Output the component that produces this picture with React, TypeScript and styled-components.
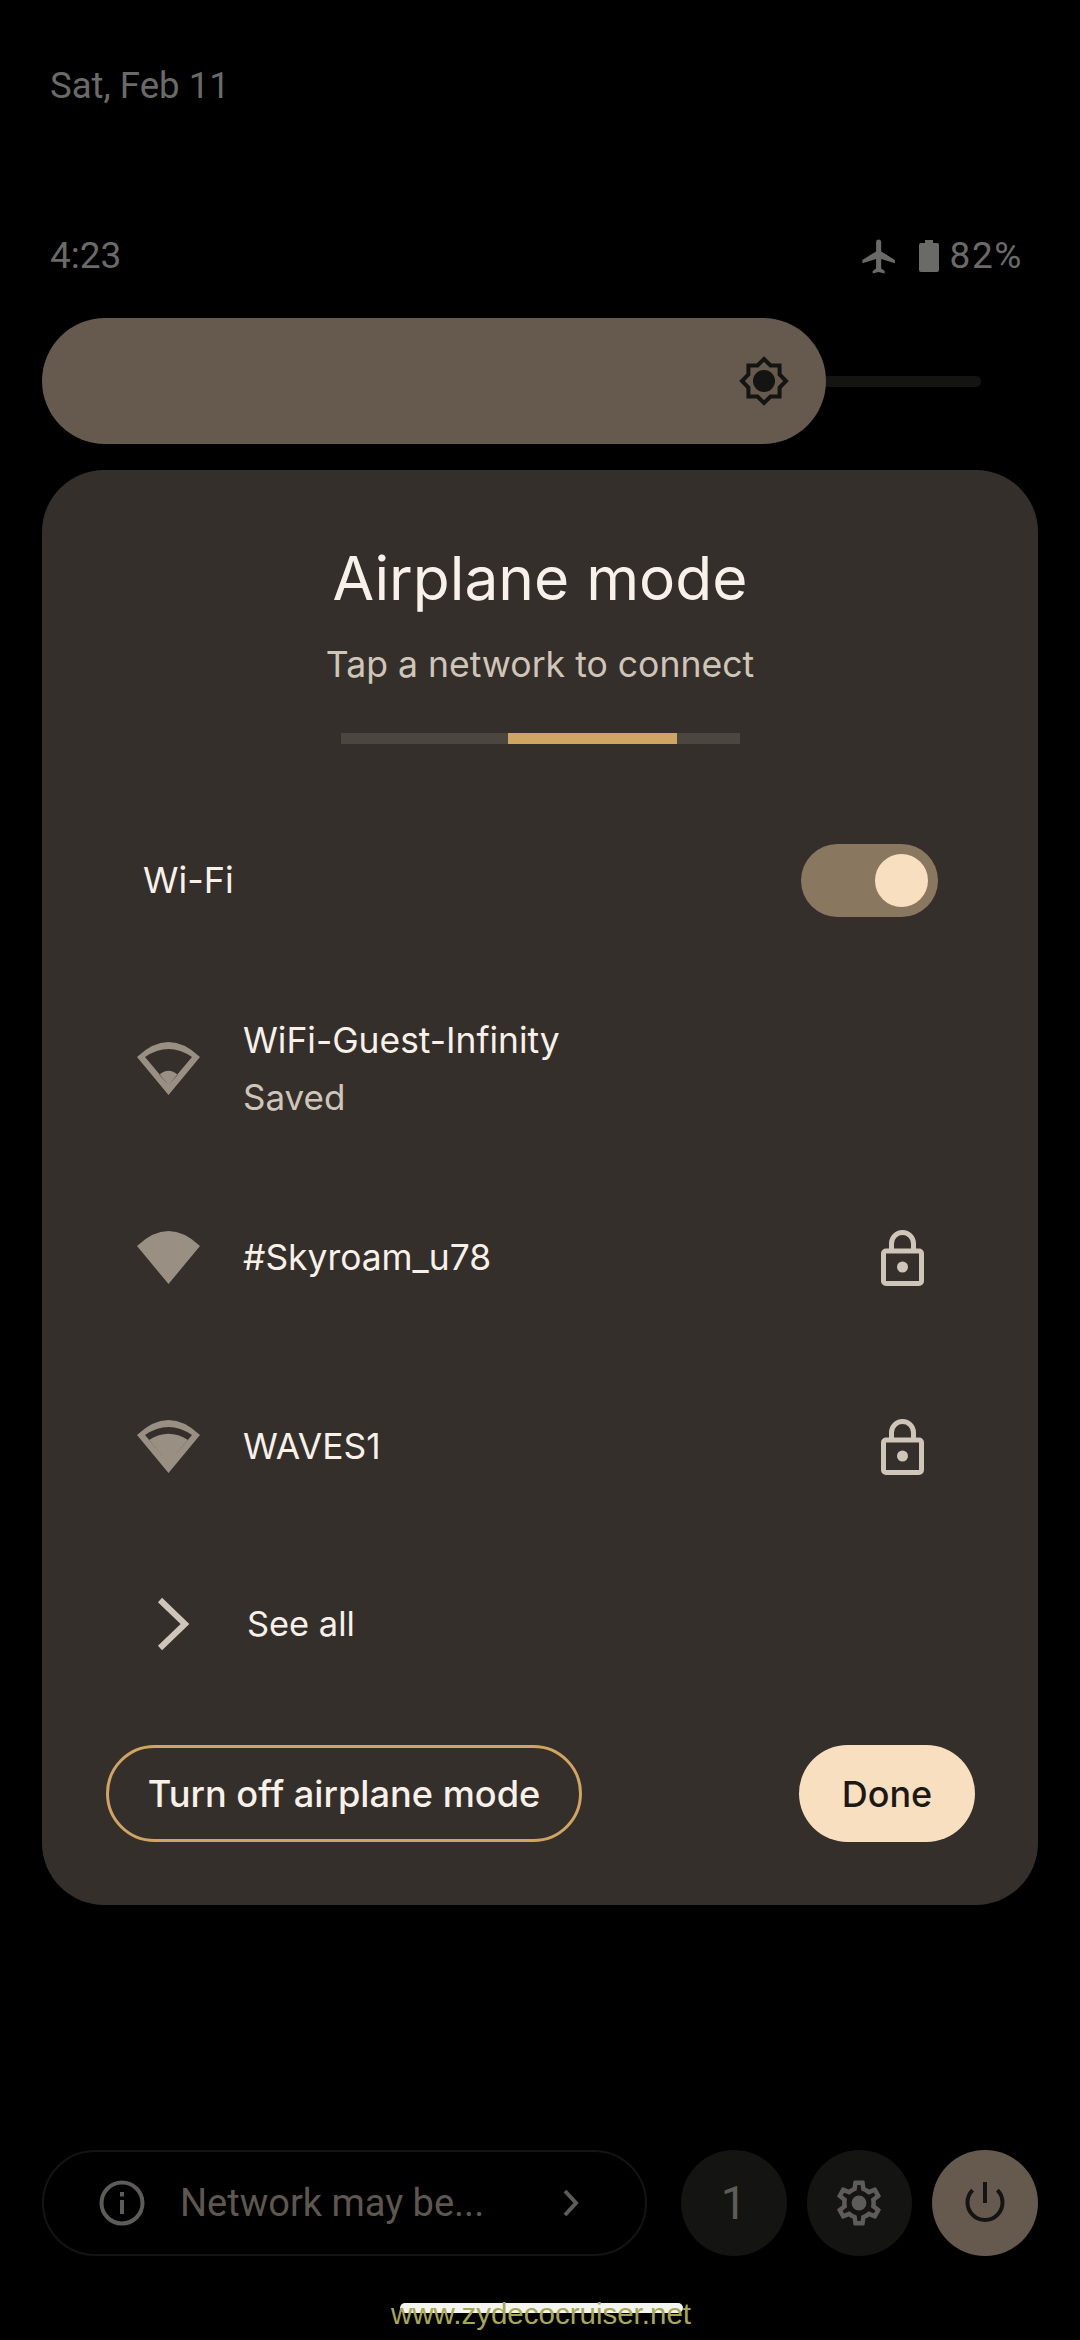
import React from "react";
import styled, { createGlobalStyle } from "styled-components";

const Global = createGlobalStyle`
  html, body { margin: 0; padding: 0; background: #000; }
`;

const UI = `"Inter", "Noto Sans", sans-serif`;
const SYS = `"Roboto", "Liberation Sans", sans-serif`;

const Page = styled.div`
  position: relative;
  width: 1080px;
  height: 2340px;
  overflow: hidden;
  background: #000;
  padding: 0 42px;
  box-sizing: border-box;
  display: flex;
  flex-direction: column;
`;
const DateText = styled.div`
  margin: 65px 0 0 8px;
  font: 400 36.6px/42px ${SYS};
  color: #6a6a68;
`;
const StatusRow = styled.div`
  margin: 128px 0 0 8px;
  height: 42px;
  padding-right: 15px;
  display: flex;
  align-items: center;
  justify-content: space-between;
  font: 400 37px/42px ${SYS};
  color: #6a6a68;
`;
const StatusRight = styled.div`
  display: flex;
  align-items: center;
`;
const BatteryLevel = styled.span`
  letter-spacing: 1.6px;
`;
const Slider = styled.div`
  margin-top: 41px;
  display: flex;
  align-items: center;
`;
const SliderFill = styled.div`
  width: 784px;
  height: 126px;
  border-radius: 63px;
  background: #655a4d;
  display: flex;
  align-items: center;
  justify-content: flex-end;
  padding-right: 37px;
  box-sizing: border-box;
`;
const SliderTrack = styled.div`
  width: 155px;
  height: 11px;
  border-radius: 0 5px 5px 0;
  background: #141412;
`;
const Card = styled.section`
  margin-top: 26px;
  width: 996px;
  height: 1435px;
  border-radius: 62px;
  background: #352f2b;
  display: flex;
  flex-direction: column;
  box-sizing: border-box;
`;
const Title = styled.h1`
  margin: 72px 0 0;
  text-align: center;
  font: 400 60.4px/72px ${UI};
  color: #f8f1ea;
  letter-spacing: 0;
`;
const Subtitle = styled.div`
  margin-top: 29px;
  text-align: center;
  font: 400 35.6px/44px ${UI};
  color: #cfc5b8;
`;
const Progress = styled.div`
  margin: 46px auto 0;
  width: 399px;
  height: 11px;
  background: #4c4641;
  display: flex;
`;
const ProgressFill = styled.div<{ $offset: number; $width: number }>`
  margin-left: ${(p) => p.$offset}px;
  width: ${(p) => p.$width}px;
  background: #d0a463;
`;
const WifiRow = styled.div`
  margin-top: 100px;
  height: 73px;
  padding: 0 100px 0 101px;
  display: flex;
  align-items: center;
  justify-content: space-between;
`;
const WifiLabel = styled.div`
  margin-top: -2px;
  font: 400 36px/46px ${UI};
  color: #f8f1ea;
`;
const Toggle = styled.div`
  width: 137px;
  height: 73px;
  border-radius: 37px;
  background: #89785f;
  display: flex;
  align-items: center;
  justify-content: flex-end;
  padding-right: 10px;
  box-sizing: border-box;
`;
const Thumb = styled.div`
  width: 53px;
  height: 53px;
  border-radius: 50%;
  background: #f8dfc0;
`;
const Networks = styled.div`
  margin-top: 57px;
  display: flex;
  flex-direction: column;
`;
const NetworkRow = styled.div`
  height: 189px;
  padding: 0 114px 0 95px;
  display: flex;
  align-items: center;
`;
const NetworkText = styled.div`
  margin-left: 43px;
  flex: 1;
`;
const NetworkName = styled.div`
  font: 400 35.4px/50px ${UI};
  color: #f8f1ea;
`;
const NetworkStatus = styled.div`
  margin-top: 6px;
  font: 400 35px/50px ${UI};
  color: #cfc5b8;
`;
const SeeAll = styled.div`
  height: 80px;
  margin-top: 43px;
  padding-left: 115px;
  display: flex;
  align-items: center;
`;
const SeeAllLabel = styled.div`
  margin-left: 56px;
  font: 400 34.4px/50px ${UI};
  color: #f8f1ea;
`;
const Actions = styled.div`
  margin-top: 81px;
  padding: 0 63px 0 64px;
  display: flex;
  justify-content: space-between;
`;
const OutlineButton = styled.div`
  width: 476px;
  height: 97px;
  box-sizing: border-box;
  border: 3px solid #d0a463;
  border-radius: 49px;
  display: flex;
  align-items: center;
  justify-content: center;
  font: 500 36.2px/44px ${UI};
  color: #f8f1ea;
`;
const FilledButton = styled.div`
  width: 176px;
  height: 97px;
  border-radius: 49px;
  background: #f8dfc0;
  display: flex;
  align-items: center;
  justify-content: center;
  font: 500 36px/44px ${UI};
  color: #1c1815;
`;
const Footer = styled.div`
  margin-top: 245px;
  display: flex;
  align-items: center;
`;
const Notice = styled.div`
  width: 606px;
  height: 106px;
  box-sizing: border-box;
  border: 2px solid #141412;
  border-radius: 53px;
  padding: 0 66px 0 55px;
  display: flex;
  align-items: center;
  margin-right: 34px;
`;
const NoticeText = styled.div`
  flex: 1;
  margin-left: 35px;
  font: 400 38px/44px ${SYS};
  color: #5e574f;
`;
const RoundButton = styled.div<{ $on?: boolean }>`
  width: 106px;
  height: 106px;
  border-radius: 50%;
  margin-right: 20px;
  background: ${(p) => (p.$on ? "#655a4d" : "#141412")};
  display: flex;
  align-items: center;
  justify-content: center;
  font: 400 46px/50px ${SYS};
  color: #5e5c58;
  &:last-child { margin-right: 0; }
`;
const HomeBar = styled.div`
  position: absolute;
  left: 400px;
  top: 2303px;
  width: 283px;
  height: 10px;
  border-radius: 5px;
  background: #f4f4f0;
`;
const Watermark = styled.div`
  position: absolute;
  left: 390px;
  top: 2297px;
  width: 302px;
  text-align: center;
  font: 400 29.5px/34px "Liberation Sans", sans-serif;
  color: #a8a752;
  white-space: nowrap;
`;

const OUTER = "M0 15Q31.5 -15 63 15L31.5 53Z";
const INNER = "M8 15Q31.5 -1 55 15L31.5 43Z";
const LOW_HUMP = "M22.3 32.7Q31.5 24.7 40.7 32.7L31.5 43Z";
const HIGH_HUMP = "M12 20Q31.5 7.4 51 20L31.5 43Z";

const WifiIcon = ({ d }: { d: string }) => (
  <svg width="63" height="53" viewBox="0 0 63 53" style={{ flex: "none" }}>
    <path fill="#9a8f83" fillRule="evenodd" d={d} />
  </svg>
);

const LockIcon = () => (
  <svg width="43" height="56" viewBox="0 0 43 56" style={{ flex: "none" }}>
    <path d="M10.5 21V13.5a11 11 0 0 1 22 0V21" fill="none" stroke="#cfc5b8" strokeWidth="5" />
    <rect x="2.5" y="21" width="38" height="32.5" rx="2.5" fill="none" stroke="#cfc5b8" strokeWidth="5" />
    <circle cx="21.5" cy="37" r="5.5" fill="#cfc5b8" />
  </svg>
);

const starPoints = (() => {
  const pts: string[] = [];
  for (let i = 0; i < 16; i++) {
    const r = i % 2 === 0 ? 22 : 16.9;
    const a = (i * Math.PI) / 8 - Math.PI / 2;
    pts.push(`${(25 + r * Math.cos(a)).toFixed(2)},${(25 + r * Math.sin(a)).toFixed(2)}`);
  }
  return pts.join(" ");
})();

const SunIcon = () => (
  <svg width="50" height="50" viewBox="0 0 50 50">
    <polygon points={starPoints} fill="none" stroke="#141412" strokeWidth="4" />
    <circle cx="25" cy="25" r="11" fill="#141412" />
  </svg>
);

const PlaneIcon = () => (
  <svg width="41" height="41" viewBox="0 0 24 24" fill="#6a6a68" style={{ marginRight: 19 }}>
    <path d="M21 16v-2l-8-5V3.5c0-.83-.67-1.5-1.5-1.5S10 2.67 10 3.5V9l-8 5v2l8-2.5V19l-2 1.5V22l3.5-1 3.5 1v-1.5L13 19v-5.5l8 2.5z" />
  </svg>
);

const BatteryIcon = () => (
  <svg width="20" height="32" viewBox="0 0 20 32" fill="#6a6a68" style={{ marginRight: 11 }}>
    <path d="M6 0h8v3h4a2 2 0 0 1 2 2v25a2 2 0 0 1-2 2H2a2 2 0 0 1-2-2V5a2 2 0 0 1 2-2h4z" />
  </svg>
);

const InfoIcon = () => (
  <svg width="46" height="46" viewBox="0 0 46 46" fill="none" style={{ flex: "none" }}>
    <circle cx="23" cy="23" r="20.5" stroke="#5e5c58" strokeWidth="4" />
    <rect x="21" y="20" width="4" height="14" fill="#5e5c58" />
    <rect x="21" y="12" width="4" height="4.5" fill="#5e5c58" />
  </svg>
);

const SmallChevron = () => (
  <svg width="16" height="28" viewBox="0 0 16 28" fill="none" style={{ flex: "none" }}>
    <path d="M2 2l11 12L2 26" stroke="#5e5c58" strokeWidth="4" />
  </svg>
);

const BigChevron = () => (
  <svg width="34" height="54" viewBox="0 0 34 54" fill="none" style={{ flex: "none" }}>
    <path d="M3 3l25 24L3 51" stroke="#cfc5b8" strokeWidth="6" />
  </svg>
);

const GearIcon = () => (
  <svg width="54" height="54" viewBox="0 0 24 24" fill="#5e5c58">
    <path d="M19.43 12.98c.04-.32.07-.64.07-.98 0-.34-.03-.66-.07-.98l2.11-1.65c.19-.15.24-.42.12-.64l-2-3.46c-.09-.16-.26-.25-.44-.25-.06 0-.12.01-.17.03l-2.49 1c-.52-.4-1.08-.73-1.69-.98l-.38-2.65C14.46 2.18 14.25 2 14 2h-4c-.25 0-.46.18-.49.42l-.38 2.65c-.61.25-1.17.59-1.69.98l-2.49-1c-.06-.02-.12-.03-.18-.03-.17 0-.34.09-.43.25l-2 3.46c-.13.22-.07.49.12.64l2.11 1.65c-.04.32-.07.65-.07.98 0 .33.03.66.07.98l-2.11 1.65c-.19.15-.24.42-.12.64l2 3.46c.09.16.26.25.44.25.06 0 .12-.01.17-.03l2.49-1c.52.4 1.08.73 1.69.98l.38 2.65c.03.24.24.42.49.42h4c.25 0 .46-.18.49-.42l.38-2.65c.61-.25 1.17-.59 1.69-.98l2.49 1c.06.02.12.03.18.03.17 0 .34-.09.43-.25l2-3.46c.12-.22.07-.49-.12-.64l-2.11-1.65zm-1.98-1.71c.04.31.05.52.05.73 0 .21-.02.43-.05.73l-.14 1.13.89.7 1.08.84-.7 1.21-1.27-.51-1.04-.42-.9.68c-.43.32-.84.56-1.25.73l-1.06.43-.16 1.13-.2 1.35h-1.4l-.19-1.35-.16-1.13-1.06-.43c-.43-.18-.83-.41-1.23-.71l-.91-.7-1.06.43-1.27.51-.7-1.21 1.08-.84.89-.7-.14-1.13c-.03-.31-.05-.54-.05-.74s.02-.43.05-.73l.14-1.13-.89-.7-1.08-.84.7-1.21 1.27.51 1.04.42.9-.68c.43-.32.84-.56 1.25-.73l1.06-.43.16-1.13.2-1.35h1.39l.19 1.35.16 1.13 1.06.43c.43.18.83.41 1.23.71l.91.7 1.06-.43 1.27-.51.7 1.21-1.07.85-.89.7.14 1.13z" />
    <circle cx="12" cy="12" r="3.3" />
  </svg>
);

const PowerIcon = () => (
  <svg width="46" height="46" viewBox="0 0 46 46" fill="none" stroke="#141412" strokeWidth="4">
    <path d="M23 2v21" />
    <path d="M10.6 10.1a17.5 17.5 0 1 0 24.8 0" />
  </svg>
);

export default function App() {
  return (
    <Page>
      <Global />
      <DateText>Sat, Feb 11</DateText>
      <StatusRow>
        <span>4:23</span>
        <StatusRight>
          <PlaneIcon />
          <BatteryIcon />
          <BatteryLevel>82%</BatteryLevel>
        </StatusRight>
      </StatusRow>
      <Slider>
        <SliderFill>
          <SunIcon />
        </SliderFill>
        <SliderTrack />
      </Slider>
      <Card>
        <Title>Airplane mode</Title>
        <Subtitle>Tap a network to connect</Subtitle>
        <Progress>
          <ProgressFill $offset={167} $width={169} />
        </Progress>
        <WifiRow>
          <WifiLabel>Wi-Fi</WifiLabel>
          <Toggle>
            <Thumb />
          </Toggle>
        </WifiRow>
        <Networks>
          <NetworkRow>
            <WifiIcon d={`${OUTER} ${INNER} ${LOW_HUMP}`} />
            <NetworkText>
              <NetworkName>WiFi-Guest-Infinity</NetworkName>
              <NetworkStatus>Saved</NetworkStatus>
            </NetworkText>
          </NetworkRow>
          <NetworkRow>
            <WifiIcon d={OUTER} />
            <NetworkText>
              <NetworkName>#Skyroam_u78</NetworkName>
            </NetworkText>
            <LockIcon />
          </NetworkRow>
          <NetworkRow>
            <WifiIcon d={`${OUTER} ${INNER} ${HIGH_HUMP}`} />
            <NetworkText>
              <NetworkName>WAVES1</NetworkName>
            </NetworkText>
            <LockIcon />
          </NetworkRow>
        </Networks>
        <SeeAll>
          <BigChevron />
          <SeeAllLabel>See all</SeeAllLabel>
        </SeeAll>
        <Actions>
          <OutlineButton>Turn off airplane mode</OutlineButton>
          <FilledButton>Done</FilledButton>
        </Actions>
      </Card>
      <Footer>
        <Notice>
          <InfoIcon />
          <NoticeText>Network may be...</NoticeText>
          <SmallChevron />
        </Notice>
        <RoundButton>1</RoundButton>
        <RoundButton>
          <GearIcon />
        </RoundButton>
        <RoundButton $on>
          <PowerIcon />
        </RoundButton>
      </Footer>
      <HomeBar />
      <Watermark>www.zydecocruiser.net</Watermark>
    </Page>
  );
}
